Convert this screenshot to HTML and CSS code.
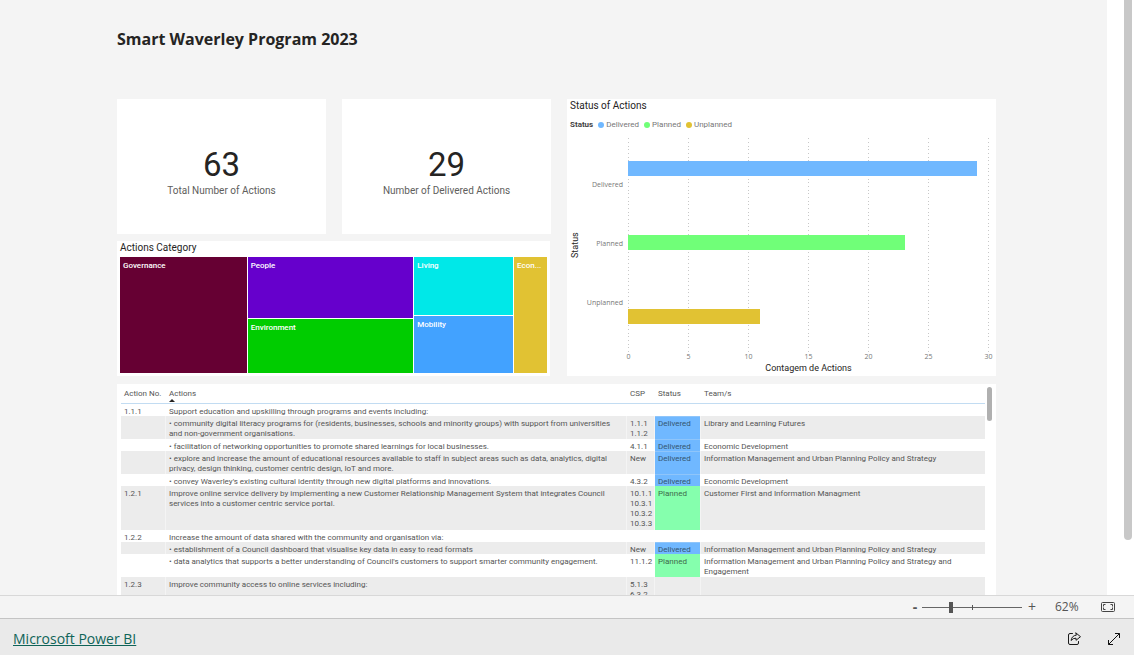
FILE: index.html
```html
<!DOCTYPE html>
<html lang="en">
<head>
<meta charset="utf-8">
<title>Smart Waverley Program 2023</title>
<link rel="stylesheet" href="styles.css">
</head>
<body>
<main class="viewport">
  <div class="report">
    <h1 class="report-title">Smart Waverley Program 2023</h1>
    <div class="visuals">
      <div class="left">
        <div class="cards">
          <section class="card"><p class="value">63</p><p class="caption">Total Number of Actions</p></section>
          <section class="card"><p class="value">29</p><p class="caption">Number of Delivered Actions</p></section>
        </div>
        <section class="treemap-card">
          <h2 class="visual-title">Actions Category</h2>
          <div class="treemap">
            <div class="tile governance">Governance</div>
            <div class="stack mid">
              <div class="tile people">People</div>
              <div class="tile environment">Environment</div>
            </div>
            <div class="stack">
              <div class="tile living">Living</div>
              <div class="tile mobility">Mobility</div>
            </div>
            <div class="tile economy">Econ...</div>
          </div>
        </section>
      </div>
      <section class="chart-card">
        <h2 class="visual-title">Status of Actions</h2>
        <ul class="legend">
          <li class="legend-title">Status</li>
          <li><span class="dot delivered"></span>Delivered</li>
          <li><span class="dot planned"></span>Planned</li>
          <li><span class="dot unplanned"></span>Unplanned</li>
        </ul>
        <div class="chart">
          <div class="y-title">Status</div>
          <div class="categories"><span>Delivered</span><span>Planned</span><span>Unplanned</span></div>
          <div class="plot">
            <div class="gridlines"><i></i><i></i><i></i><i></i><i></i><i></i><i></i></div>
            <div class="bars">
              <div class="bar delivered" style="width:96.67%"></div>
              <div class="bar planned" style="width:76.67%"></div>
              <div class="bar unplanned" style="width:36.67%"></div>
            </div>
          </div>
          <div class="ticks"><span>0</span><span>5</span><span>10</span><span>15</span><span>20</span><span>25</span><span>30</span></div>
          <div class="x-title">Contagem de Actions</div>
        </div>
      </section>
    </div>
    <section class="table-card">
      <table class="actions">
        <colgroup><col class="c-no"><col><col class="c-csp"><col class="c-status"><col class="c-team"></colgroup>
        <thead>
          <tr><th>Action No.</th><th class="sorted">Actions</th><th>CSP</th><th>Status</th><th>Team/s</th></tr>
        </thead>
        <tbody>
          <tr><td>1.1.1</td><td>Support education and upskilling through programs and events including:</td><td></td><td></td><td></td></tr>
          <tr class="two"><td></td><td>• community digital literacy programs for (residents, businesses, schools and minority groups) with support from universities<br>and non-government organisations.</td><td>1.1.1<br>1.1.2</td><td class="delivered">Delivered</td><td>Library and Learning Futures</td></tr>
          <tr><td></td><td>• facilitation of networking opportunities to promote shared learnings for local businesses.</td><td>4.1.1</td><td class="delivered">Delivered</td><td>Economic Development</td></tr>
          <tr class="two"><td></td><td>• explore and increase the amount of educational resources available to staff in subject areas such as data, analytics, digital<br>privacy, design thinking, customer centric design, IoT and more.</td><td>New</td><td class="delivered">Delivered</td><td>Information Management and Urban Planning Policy and Strategy</td></tr>
          <tr><td></td><td>• convey Waverley's existing cultural identity through new digital platforms and innovations.</td><td>4.3.2</td><td class="delivered">Delivered</td><td>Economic Development</td></tr>
          <tr class="four"><td>1.2.1</td><td>Improve online service delivery by implementing a new Customer Relationship Management System that integrates Council<br>services into a customer centric service portal.</td><td>10.1.1<br>10.3.1<br>10.3.2<br>10.3.3</td><td class="plan">Planned</td><td>Customer First and Information Managment</td></tr>
          <tr><td>1.2.2</td><td>Increase the amount of data shared with the community and organisation via:</td><td></td><td></td><td></td></tr>
          <tr><td></td><td>• establishment of a Council dashboard that visualise key data in easy to read formats</td><td>New</td><td class="delivered">Delivered</td><td>Information Management and Urban Planning Policy and Strategy</td></tr>
          <tr class="two"><td></td><td>• data analytics that supports a better understanding of Council's customers to support smarter community engagement.</td><td>11.1.2</td><td class="plan">Planned</td><td>Information Management and Urban Planning Policy and Strategy and<br>Engagement</td></tr>
          <tr class="two"><td>1.2.3</td><td>Improve community access to online services including:</td><td>5.1.3<br>6.3.2</td><td></td><td></td></tr>
        </tbody>
      </table>
      <div class="table-scroll"></div>
    </section>
  </div>
  <div class="page-scroll"></div>
</main>
<div class="zoombar">
  <button class="step minus" aria-label="Zoom out">-</button>
  <input class="slider" type="range" min="0" max="100" value="28" aria-label="Zoom">
  <button class="step plus" aria-label="Zoom in">+</button>
  <span class="percent">62%</span>
  <button class="icon" aria-label="Fit to page">
    <svg width="14" height="10" viewBox="0 0 14 10" fill="none" stroke="#444"><rect x=".5" y=".5" width="13" height="9" rx="1"/><path d="M4.5 2.5h-2v2M2.500 5.500v2h2M9.500 2.500h2v2M11.500 5.500v2h-2"/></svg>
  </button>
</div>
<footer class="footer">
  <a class="brand" href="#">Microsoft Power BI</a>
  <button class="icon" aria-label="Share">
    <svg width="14" height="14" viewBox="0 0 14 14" fill="none" stroke="#1a1a1a" stroke-linejoin="round" stroke-linecap="round"><path d="M5.500 1.500H3Q1.500 1.500 1.500 3V11Q1.500 12.500 3 12.500H10Q11.500 12.500 11.500 11V9.500"/><path d="M9 1L13.500 4.700 9 8.300V6.200Q6 6 4.100 8.500 4.700 3.700 9 3.200Z"/></svg>
  </button>
  <button class="icon" aria-label="Full screen">
    <svg width="14" height="14" viewBox="0 0 14 14" fill="none" stroke="#111"><path d="M1.500 12.500L12.500 1.500M8 1.500H12.500V6M1.500 8V12.500H6"/></svg>
  </button>
</footer>
</body>
</html>
```

FILE: styles.css
```css
* { box-sizing: border-box; }

body {
  margin: 0;
  height: 100vh;
  display: flex;
  flex-direction: column;
  overflow: hidden;
  font: 8px/10px Roboto, "Open Sans", sans-serif;
  color: #555;
  background: #fff;
}

h1, h2, p, ul { margin: 0; padding: 0; font-weight: 400; }

button {
  border: 0;
  padding: 0;
  background: none;
  font: inherit;
  color: inherit;
}

.viewport {
  flex: 1;
  min-height: 0;
  display: flex;
  overflow: hidden;
}

.report {
  flex: 1;
  min-width: 0;
  padding: 27px 111px 0 117px;
  background: #f4f4f4;
}

.report-title {
  height: 72px;
  font-family: "Open Sans", sans-serif;
  font-size: 16px;
  line-height: 24px;
  font-weight: 700;
  color: #252423;
}

.page-scroll {
  width: 27px;
  padding-left: 17px;
  padding-right: 2px;
}

.page-scroll::before {
  content: "";
  display: block;
  height: 540px;
  background: #c8c8c8;
  border-radius: 0 0 4px 4px;
}

.visuals {
  display: grid;
  grid-template-columns: 434fr 429fr;
  gap: 16px;
}

.left {
  display: grid;
  gap: 7px;
  min-width: 0;
}

.cards {
  display: grid;
  grid-template-columns: 1fr 1fr;
  gap: 16px;
}

.card {
  height: 135px;
  padding-top: 47px;
  background: #fff;
  text-align: center;
}

.value {
  font: 33px/38px Roboto, sans-serif;
  color: #252423;
}

.caption {
  font-size: 10px;
  line-height: 14px;
  color: #605e5c;
}

.treemap-card {
  height: 135px;
  margin-right: 1px;
  padding: 0 3px 3px;
  background: #fff;
  display: flex;
  flex-direction: column;
}

.visual-title {
  height: 16px;
  font: 10px/14px Roboto, sans-serif;
  color: #252423;
}

.treemap {
  flex: 1;
  display: grid;
  grid-template-columns: 127fr 166fr 99fr 33fr;
  gap: 1px;
}

.stack {
  display: grid;
  grid-template-rows: 1fr 1fr;
  gap: 1px;
}

.mid { grid-template-rows: 61fr 54fr; }

.tile {
  padding: 4px 3px;
  overflow: hidden;
  color: #fff;
  font-weight: 500;
}

.governance { background: #660033; }
.people { background: #6600cc; }
.environment { background: #00cc00; }
.living { background: #00e8e8; }
.mobility { background: #42a2ff; }
.economy { background: #e1c233; }

.chart-card {
  padding: 0 3px;
  background: #fff;
  display: flex;
  flex-direction: column;
}

.legend {
  display: flex;
  gap: 5px;
  list-style: none;
  margin-top: 5px;
  color: #777;
}

.legend li {
  display: flex;
  align-items: center;
  gap: 2px;
}

.legend .legend-title {
  font-weight: 700;
  color: #444;
}

.dot {
  width: 6px;
  height: 6px;
  border-radius: 50%;
}

.delivered { background: #70b8ff; }
.planned { background: #70ff78; }
.unplanned { background: #e1c233; }

.chart {
  margin: 8px 4px 0 0;
  display: grid;
  grid-template-columns: 10px 38px 1fr;
  grid-template-rows: 214px 9px 14px;
  column-gap: 5px;
}

.y-title {
  writing-mode: vertical-rl;
  transform: rotate(180deg);
  text-align: center;
  font: 9px/10px Roboto, sans-serif;
  color: #252423;
}

.categories {
  display: grid;
  grid-template-rows: repeat(3, 59px);
  align-items: center;
  justify-items: end;
  padding-top: 17px;
  font-family: "Open Sans", sans-serif;
  font-size: 7px;
  color: #777;
}

.plot { display: grid; }

.gridlines, .bars { grid-area: 1 / 1; }

.gridlines {
  display: flex;
  justify-content: space-between;
}

.gridlines i {
  width: 1px;
  background: repeating-linear-gradient(#c8c8c8 0 1px, transparent 1px 4px, #c8c8c8 4px 5px, transparent 5px 8px, #c8c8c8 8px 9px, transparent 9px 11px);
}

.bars {
  z-index: 1;
  padding-top: 23px;
  display: flex;
  flex-direction: column;
  gap: 59px;
}

.bar { height: 15px; }

.ticks {
  grid-column: 3;
  display: flex;
  justify-content: space-between;
  font-family: "Open Sans", sans-serif;
  font-size: 7px;
  color: #777;
}

.ticks span {
  width: 1px;
  display: flex;
  justify-content: center;
}

.x-title {
  grid-column: 3;
  text-align: center;
  font: 9px/14px Roboto, sans-serif;
  color: #252423;
}

.table-card {
  margin-top: 8px;
  padding: 3px 3px 0 4px;
  background: #fff;
  display: flex;
  gap: 2px;
}

.actions {
  flex: 1;
  width: 100%;
  table-layout: fixed;
  border-collapse: separate;
  border-spacing: 0;
}

.c-no { width: 45px; }
.c-csp { width: 28px; }
.c-status { width: 46px; }
.c-team { width: 284px; }

.actions th {
  position: relative;
  height: 17px;
  padding: 2px 0 4px 3px;
  text-align: left;
  font-weight: 400;
  white-space: nowrap;
  border-bottom: 1px solid #c2dcf2;
}

.sorted::after {
  content: "";
  position: absolute;
  left: 3px;
  bottom: 1px;
  border: 3px solid transparent;
  border-top: 0;
  border-bottom-color: #252423;
}

.actions td {
  height: 12px;
  padding: 3px 0 0 3px;
  line-height: 9px;
  vertical-align: top;
  white-space: nowrap;
  border-right: 1px solid #f4f4f4;
}

.actions tr > :last-child { border-right: 0; }

.actions tbody tr:nth-child(odd) td { border-right-color: #fff; }

.actions tbody tr:nth-child(even) { background: #ececec; }

.actions .two td { height: 23px; line-height: 10px; }
.actions .four td { height: 44px; line-height: 10px; }

.actions td.delivered, .actions td.plan {
  box-shadow: inset 0 1px #8fc5fa;
  color: #34556f;
}

.actions td.plan {
  background: #85ffad;
  box-shadow: none;
  color: #3d6b4b;
}

.table-scroll {
  width: 5px;
  height: 34px;
  margin-right: 1px;
  border-radius: 3px;
  background: #b0b0b0;
}

.zoombar {
  height: 23px;
  flex-shrink: 0;
  padding-right: 19px;
  display: flex;
  align-items: center;
  justify-content: flex-end;
  background: #f4f4f4;
  border-top: 1px solid #d8d8d8;
  color: #555;
  font-family: "Open Sans", sans-serif;
}

.step {
  width: 10px;
  font-size: 14px;
  line-height: 20px;
}

.minus { font-weight: 700; }

.plus { margin-left: 5px; }

.slider {
  appearance: none;
  width: 100px;
  height: 12px;
  margin: 0 0 0 2px;
  background:
    linear-gradient(#555, #555) 50px 4px / 1px 5px no-repeat,
    linear-gradient(#666, #666) 0 6px / 100% 1px no-repeat;
}

.slider::-webkit-slider-thumb {
  appearance: none;
  width: 4px;
  height: 11px;
  background: #555;
}

.percent {
  width: 24px;
  margin: 0 22px 0 18px;
  font-size: 12px;
  line-height: 20px;
}

.icon {
  display: flex;
  align-items: center;
}

.footer {
  height: 37px;
  flex-shrink: 0;
  padding: 3px 13px 0;
  display: flex;
  align-items: center;
  gap: 26px;
  background: #eaeaea;
  border-top: 1px solid #c4c4c4;
}

.brand {
  margin-right: auto;
  font-family: "Open Sans", sans-serif;
  font-size: 14px;
  line-height: 20px;
  color: #0f6458;
}
```
